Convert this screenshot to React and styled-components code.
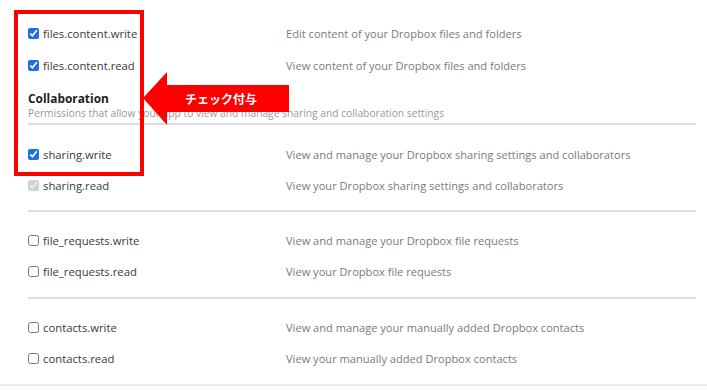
import React from "react";
import styled, { createGlobalStyle } from "styled-components";

const Global = createGlobalStyle`
  html, body { margin: 0; padding: 0; background: #fff; }
  body { font-family: "Open Sans", "Noto Sans", sans-serif; }
`;

const Page = styled.div`
  position: relative;
  width: 707px;
  height: 391px;
  overflow: hidden;
  background: #fff;
`;

const List = styled.div`
  padding-left: 28px;
  width: 668px;
`;

const Section = styled.div`
  padding: ${(p) => p.$pt}px 0 ${(p) => p.$pb}px;
  border-bottom: ${(p) => (p.$last ? "none" : "2px solid #dedede")};
`;

const Row = styled.div`
  display: grid;
  grid-template-columns: 258px 1fr;
  align-items: center;
  height: ${(p) => p.$h || 31}px;
`;

const Label = styled.label`
  display: flex;
  align-items: center;
  gap: 4px;
  font-size: 11.3px;
  color: #3a3a3a;
`;

const Box = styled.input.attrs({ type: "checkbox" })`
  width: 11px;
  height: 11px;
  margin: 0;
  accent-color: #1f6fe0;
`;

const Desc = styled.span`
  font-size: 11.1px;
  color: #7a7a7a;
`;

const Heading = styled.div`
  margin-top: 9px;
  font-size: 11.9px;
  font-weight: 700;
  color: #1e1e1e;
  line-height: 17px;
`;

const Sub = styled.div`
  font-size: 10.25px;
  color: #9a9a9a;
  line-height: 12px;
  padding-bottom: 4px;
  border-bottom: 2px solid #dedede;
`;

const Bottom = styled.div`
  height: 2px;
  background: #ebebeb;
`;

const RedBox = styled.div`
  position: absolute;
  left: 14px;
  top: 10px;
  width: 122px;
  height: 158px;
  border: 4px solid #f00;
`;

const Arrow = styled.div`
  position: absolute;
  left: 143px;
  top: 72px;
  width: 146px;
  height: 53px;
`;

const ArrowText = styled.span`
  position: absolute;
  left: 42px;
  top: 13px;
  height: 27px;
  line-height: 27px;
  color: #fff;
  font-family: "Noto Sans CJK JP", sans-serif;
  font-weight: 700;
  font-size: 12px;
`;

const perm = (name, desc, checked, disabled) => ({ name, desc, checked, disabled });

const sections = [
  [
    perm("sharing.write", "View and manage your Dropbox sharing settings and collaborators", true),
    perm("sharing.read", "View your Dropbox sharing settings and collaborators", true, true),
  ],
  [
    perm("file_requests.write", "View and manage your Dropbox file requests"),
    perm("file_requests.read", "View your Dropbox file requests"),
  ],
  [
    perm("contacts.write", "View and manage your manually added Dropbox contacts"),
    perm("contacts.read", "View your manually added Dropbox contacts"),
  ],
];

const PermRow = ({ p, h }) => (
  <Row $h={h}>
    <Label>
      <Box defaultChecked={p.checked} disabled={p.disabled} />
      {p.name}
    </Label>
    <Desc>{p.desc}</Desc>
  </Row>
);

export default function App() {
  return (
    <Page>
      <Global />
      <List>
        <div style={{ paddingTop: 17 }}>
          <PermRow h={32} p={perm("files.content.write", "Edit content of your Dropbox files and folders", true)} />
          <PermRow h={32} p={perm("files.content.read", "View content of your Dropbox files and folders", true)} />
          <Heading>Collaboration</Heading>
          <Sub>Permissions that allow your app to view and manage sharing and collaboration settings</Sub>
        </div>
        {sections.map((rows, i) => (
          <Section
            key={i}
            $pt={i === 0 ? 14 : 13}
            $pb={i === 0 ? 9 : 10}
            $last={i === sections.length - 1}
          >
            {rows.map((p) => (
              <PermRow key={p.name} p={p} />
            ))}
          </Section>
        ))}
      </List>
      <Bottom />
      <RedBox />
      <Arrow>
        <svg width="146" height="53" viewBox="0 0 146 53">
          <polygon points="0,26 24,0 24,13 146,13 146,40 24,40 24,53" fill="#f00" />
        </svg>
        <ArrowText>チェック付与</ArrowText>
      </Arrow>
    </Page>
  );
}
